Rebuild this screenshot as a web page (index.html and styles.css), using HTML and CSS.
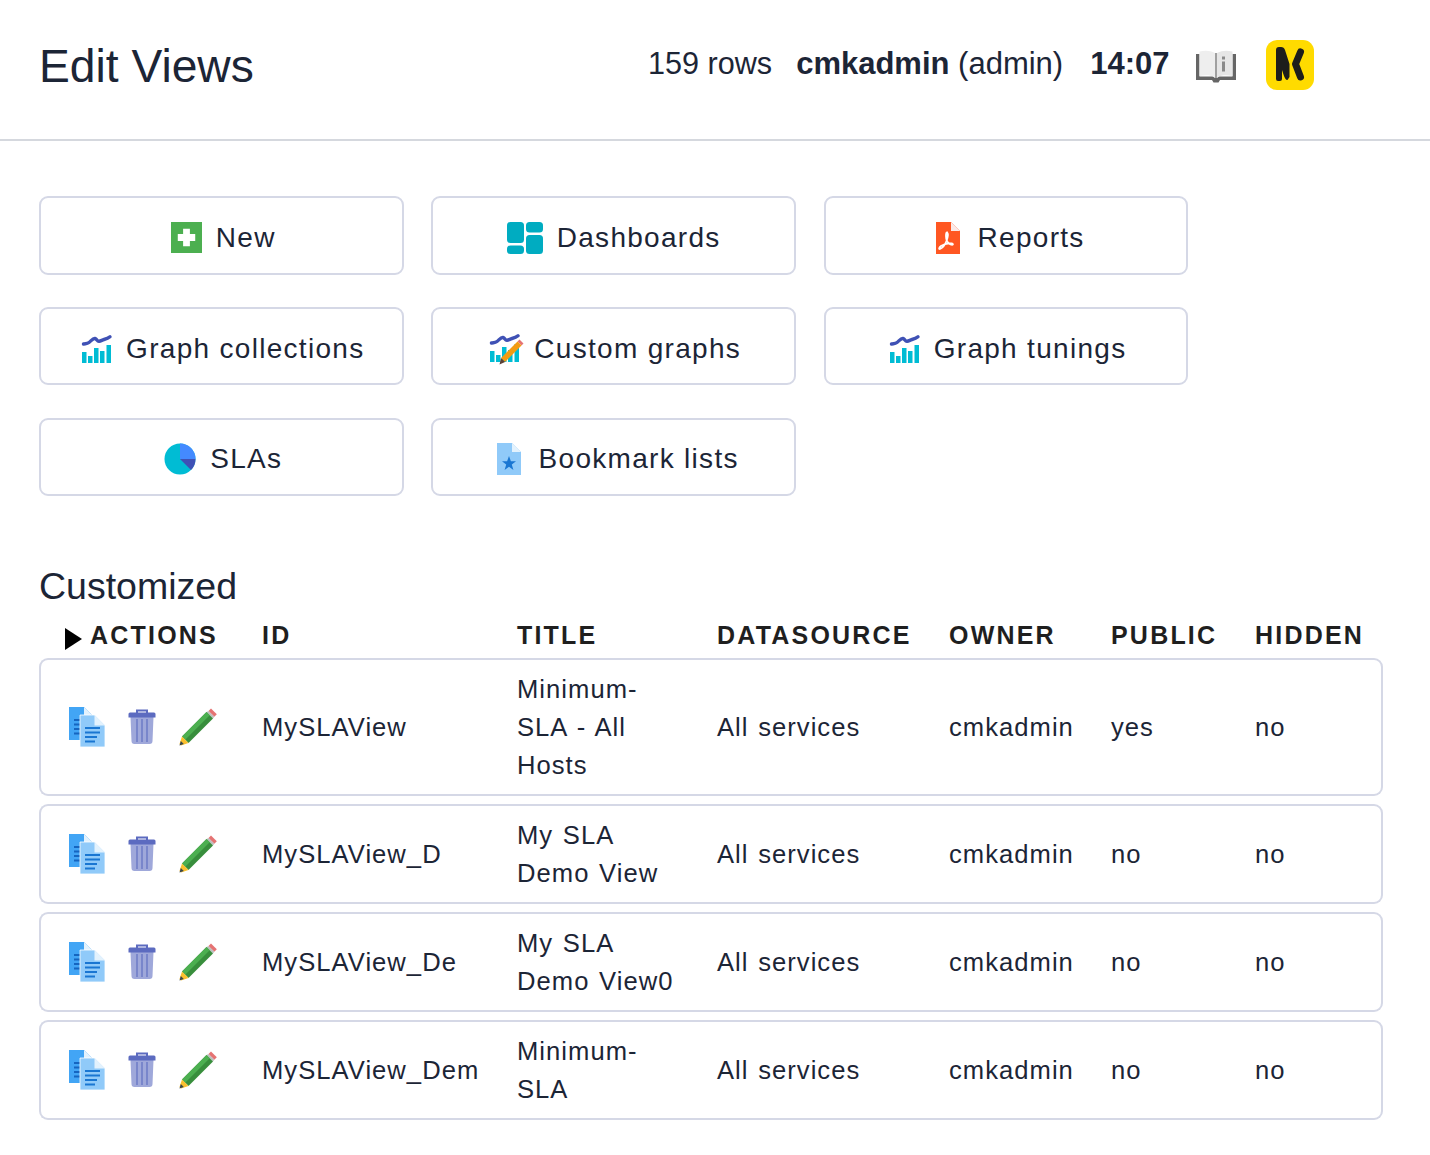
FILE: index.html
```html
<!DOCTYPE html>
<html lang="en">

<head>
    <meta charset="UTF-8">
    <meta name="viewport" content="width=device-width, initial-scale=1.0">
    <title>Edit Views</title>
    <link rel="stylesheet" href="styles.css">
</head>

<body>

    <svg class="defs" width="0" height="0">
        <symbol id="i-graph" viewBox="0 0 30 28" overflow="visible">
            <path d="M1.500 9 C3.500 8.500 5 9 7 7.500 S11 3 13 3.500 S15 6.500 17 6.300 S20 5 22 4.500 S26 3.500 28 1.800" fill="none" stroke="#3f51b5" stroke-width="3.400" stroke-linejoin="round" stroke-linecap="round"/>
            <path d="M0 17h4.500v11H0zM6 21h4.500v7H6zM12 13h4.500v15H12zM18 16h4.500v12H18zM24.500 10H29v18h-4.500z" fill="#00bcd4"/>
        </symbol>
        <symbol id="i-copy" viewBox="0 0 36 40">
            <path d="M0 0h15l9 9v24H0z" fill="#42a5f5"/>
            <path d="M15 0l9 9h-9z" fill="#e3f2fd"/>
            <path d="M5 12h8v2H5zM5 16.500h8v2H5zM5 21h8v2H5zM5 25.500h8v2H5z" fill="#1565c0"/>
            <path d="M11 8h14.500l10.500 10.500V40H11z" fill="#90caf9" stroke="#fff" stroke-width=".8"/>
            <path d="M25.500 8L36 18.500H25.500z" fill="#e3f2fd"/>
            <path d="M16 20h15v2H16zM16 24.500h15v2H16zM16 29h12v2H16zM16 33.500h10v2H16z" fill="#1976d2"/>
        </symbol>
        <symbol id="i-trash" viewBox="0 0 28 36">
            <path d="M9 4V1.500h10V4" fill="none" stroke="#5c6bc0" stroke-width="2"/>
            <path d="M2.500 8h23l-1 24a3 3 0 0 1-3 3h-15a3 3 0 0 1-3-3z" fill="#9fa8da"/>
            <path d="M8 10h2v23H8zM13 10h2v23h-2zM18 10h2v23h-2z" fill="#7986cb"/>
            <path d="M2 3.500h24a1.500 1.500 0 0 1 1.500 1.500v3.500H.500V5A1.500 1.500 0 0 1 2 3.500z" fill="#5c6bc0"/>
        </symbol>
        <symbol id="i-pencil" viewBox="0 0 38 38">
            <path d="M32 .500 L37.800 6.300 L35.300 8.800 L29.500 3z" fill="#e57373"/>
            <path d="M29.500 3 L35.300 8.800 L34 10.500 L27.500 4z" fill="#bdbdbd"/>
            <path d="M27.500 4 L34 10.500 L9.500 35 L3 28.500z" fill="#388e3c"/>
            <path d="M27.500 4 L30.700 7.200 L6.200 31.700 L3 28.500z" fill="#4caf50"/>
            <path d="M3 28.500 L9.500 35 L2 37.500 L.500 36z" fill="#fbc02d"/>
            <path d="M1.800 33 L4.800 36 L.500 37.500z" fill="#37474f"/>
        </symbol>
    </svg>

    <header class="topbar">
        <h1 class="page-title">Edit Views</h1>
        <div class="status">
            <span class="status-rows">159 rows</span>
            <span class="status-user"><b>cmkadmin</b> (admin)</span>
            <b class="status-time">14:07</b>
            <svg class="book" width="40" height="33" viewBox="0 0 40 33">
                <path d="M0 4h3.500v22.500h13.500l2 1.500h2l2-1.500h13.500V4H40v26H24l-1.500 2.500h-5L16 30H0z" fill="#666"/>
                <path d="M3.500 1.500c6-1.500 10.500-1 15.500 1.500v24c-5-2-9.500-2.500-15.500-1z" fill="#eeeeee"/>
                <path d="M21 3c5-2.500 9.500-3 15.500-1.500v24.500c-6-1.500-10.500-1-15.500 1z" fill="#e6e6e6"/>
                <path d="M19 3h2v25h-2z" fill="#a0a0a0"/>
                <path d="M26 6.500h3v3h-3zM26 11.500h3v10h-3z" fill="#8a8a8a"/>
            </svg>
            <svg class="logo" width="48" height="50" viewBox="0 0 48 50">
                <rect width="48" height="50" rx="11" fill="#ffdb00"/>
                <path d="M10 10q0-3 3-3h2q3 0 4 3l4.500 14v13l-2 3c-2 0-2.500-2-3.500-4l-2-6v9q0 2-2 2h-2q-2 0-2-2z" fill="#1d1d1b"/>
                <path d="M34.500 12L29.500 24L34.500 37" fill="none" stroke="#1d1d1b" stroke-width="7" stroke-linecap="round" stroke-linejoin="round"/>
            </svg>
        </div>
    </header>

    <main class="content">

        <nav class="buttons">
            <a class="btn" href="#">
                <svg width="31" height="31" viewBox="0 0 32 32">
                    <rect width="32" height="32" fill="#4caf50"/>
                    <path d="M12.500 7h7v5.500H25v7h-5.500V25h-7v-5.500H7v-7h5.500z" fill="#fff"/>
                </svg>
                New
            </a>
            <a class="btn btn-dash" href="#">
                <svg width="36" height="32" viewBox="0 0 36 32">
                    <g fill="#00acc1">
                        <rect x="0" y="0" width="17" height="21" rx="3.500"/>
                        <rect x="19" y="0" width="17" height="10.500" rx="3.500"/>
                        <rect x="0" y="23.500" width="17" height="8.500" rx="3.500"/>
                        <rect x="19" y="13" width="17" height="19" rx="3.500"/>
                    </g>
                </svg>
                Dashboards
            </a>
            <a class="btn" href="#">
                <svg width="32" height="32" viewBox="-4 0 32 32">
                    <path d="M0 0h15l9 9v23H0z" fill="#ff5722"/>
                    <path d="M15 0l9 9h-9z" fill="#fbe9e7"/>
                    <path d="M11 11c1.500 0 1 4-.500 8s-4 7-6.500 8c-1.500.500-1-1.500 1-3 3-2 7-3 10.500-2.500 2.500.500 1.500 2-1 1-3-1.500-4.500-5-4.500-8.500 0-2 .500-3.500 1-3.500z" fill="none" stroke="#fff" stroke-width="1.800"/>
                </svg>
                Reports
            </a>
            <a class="btn" href="#">
                <svg width="30" height="28"><use href="#i-graph"/></svg>
                Graph collections
            </a>
            <a class="btn" href="#">
                <svg width="30" height="30" viewBox="0 0 30 30">
                    <use href="#i-graph" width="30" height="28"/>
                    <path d="M29.500 5.500 L33.500 9.500 L31.500 11.500 L27.500 7.500z" fill="#e57373"/>
                    <path d="M27.500 7.500 L31.500 11.500 L15 28 L11 24z" fill="#f39c12"/>
                    <path d="M11 24 L15 28 L9.500 30.500z" fill="#5d4037"/>
                </svg>
                Custom graphs
            </a>
            <a class="btn" href="#">
                <svg width="30" height="28"><use href="#i-graph"/></svg>
                Graph tunings
            </a>
            <a class="btn" href="#">
                <svg width="32" height="32" viewBox="0 0 32 32">
                    <circle cx="16" cy="16" r="15.500" fill="#00bcd4"/>
                    <path d="M16 16V.500A15.500 15.500 0 0 1 31.500 16z" fill="#448aff"/>
                    <path d="M16 16h15.500a15.500 15.500 0 0 1-4.500 11z" fill="#3f51b5"/>
                </svg>
                SLAs
            </a>
            <a class="btn" href="#">
                <svg width="32" height="32" viewBox="-4 0 32 32">
                    <path d="M0 0h15l9 9v23H0z" fill="#90caf9"/>
                    <path d="M15 0l9 9h-9z" fill="#e3f2fd"/>
                    <path d="M12 13l1.900 5.300h5.100l-4.200 3.300 1.600 5.400-4.400-3.200-4.400 3.200 1.600-5.400L5 18.300h5.100z" fill="#1976d2"/>
                </svg>
                Bookmark lists
            </a>
        </nav>

        <h2 class="section-title">Customized</h2>

        <table class="views">
            <colgroup>
                <col class="c-actions">
                <col class="c-id">
                <col class="c-title">
                <col class="c-source">
                <col class="c-owner">
                <col class="c-public">
                <col class="c-hidden">
            </colgroup>
            <thead>
                <tr>
                    <th class="th-actions"><span class="arrow"></span>Actions</th>
                    <th>ID</th>
                    <th>Title</th>
                    <th>Datasource</th>
                    <th>Owner</th>
                    <th>Public</th>
                    <th>Hidden</th>
                </tr>
            </thead>
            <tbody>
                <tr>
                    <td>
                        <div class="actions">
                            <svg width="36" height="40"><use href="#i-copy"/></svg>
                            <svg width="28" height="36"><use href="#i-trash"/></svg>
                            <svg width="38" height="38"><use href="#i-pencil"/></svg>
                        </div>
                    </td>
                    <td>MySLAView</td>
                    <td>Minimum-SLA - All Hosts</td>
                    <td>All services</td>
                    <td>cmkadmin</td>
                    <td>yes</td>
                    <td>no</td>
                </tr>
                <tr>
                    <td>
                        <div class="actions">
                            <svg width="36" height="40"><use href="#i-copy"/></svg>
                            <svg width="28" height="36"><use href="#i-trash"/></svg>
                            <svg width="38" height="38"><use href="#i-pencil"/></svg>
                        </div>
                    </td>
                    <td>MySLAView_D</td>
                    <td>My SLA Demo View</td>
                    <td>All services</td>
                    <td>cmkadmin</td>
                    <td>no</td>
                    <td>no</td>
                </tr>
                <tr>
                    <td>
                        <div class="actions">
                            <svg width="36" height="40"><use href="#i-copy"/></svg>
                            <svg width="28" height="36"><use href="#i-trash"/></svg>
                            <svg width="38" height="38"><use href="#i-pencil"/></svg>
                        </div>
                    </td>
                    <td>MySLAView_De</td>
                    <td>My SLA Demo View0</td>
                    <td>All services</td>
                    <td>cmkadmin</td>
                    <td>no</td>
                    <td>no</td>
                </tr>
                <tr>
                    <td>
                        <div class="actions">
                            <svg width="36" height="40"><use href="#i-copy"/></svg>
                            <svg width="28" height="36"><use href="#i-trash"/></svg>
                            <svg width="38" height="38"><use href="#i-pencil"/></svg>
                        </div>
                    </td>
                    <td>MySLAView_Dem</td>
                    <td>Minimum-SLA</td>
                    <td>All services</td>
                    <td>cmkadmin</td>
                    <td>no</td>
                    <td>no</td>
                </tr>
            </tbody>
        </table>

    </main>

</body>

</html>
```

FILE: styles.css
```css
body {
    margin: 0;
    font-family: "Liberation Sans", Arial, sans-serif;
    color: #1c2536;
    background-color: #fff;
}

.defs {
    display: block;
    height: 0;
}

.topbar {
    display: flex;
    align-items: center;
    box-sizing: border-box;
    height: 141px;
    padding: 0 0 8px 39px;
    border-bottom: 2px solid #d5d8de;
}

.page-title {
    margin: 0;
    width: 609px;
    font-size: 46.200px;
    font-weight: 400;
}

.status {
    display: flex;
    align-items: center;
    font-size: 31px;
    padding-bottom: 4px;
}

.status-rows {
    margin-right: 24px;
    font-size: 30.600px;
}

.status-user {
    margin-right: 27px;
}

.book {
    margin: 6px 0 0 27px;
}

.logo {
    margin: 2px 0 0 30px;
}

.content {
    padding: 55px 47px 0 39px;
}

.buttons {
    display: grid;
    grid-template-columns: repeat(3, 364.600px);
    column-gap: 27.800px;
    row-gap: 32.300px;
}

.btn {
    display: flex;
    align-items: center;
    justify-content: center;
    gap: 14px;
    box-sizing: border-box;
    height: 78.500px;
    padding: 5px 0 0 4px;
    border: 2px solid #d5d8e6;
    border-radius: 9px;
    font-size: 28px;
    letter-spacing: 1.300px;
    text-decoration: none;
    color: #1c2536;
}

.btn-dash {
    padding-left: 0;
}

.btn svg {
    overflow: visible;
}

.section-title {
    margin: 68px 0 0;
    font-size: 37.500px;
    line-height: 44px;
    font-weight: 400;
}

.views {
    width: 1344px;
    margin-top: 3.500px;
    table-layout: fixed;
    border-collapse: separate;
    border-spacing: 0 8px;
    font-size: 25.600px;
    letter-spacing: 1.030px;
    word-spacing: 1.500px;
    line-height: 38px;
}

.c-actions { width: 223px; }
.c-id { width: 255px; }
.c-title { width: 200px; }
.c-source { width: 232px; }
.c-owner { width: 162px; }
.c-public { width: 144px; }
.c-hidden { width: 128px; }

th {
    padding: 0;
    text-align: left;
    font-size: 25px;
    line-height: 30px;
    font-weight: 700;
    text-transform: uppercase;
    letter-spacing: 2.200px;
    color: #1f1f1f;
}

.th-actions {
    padding-left: 26px;
}

.arrow {
    display: inline-block;
    width: 0;
    height: 0;
    margin: -4px 8px -4px 0;
    vertical-align: -2px;
    border-left: 17px solid #000;
    border-top: 11px solid transparent;
    border-bottom: 11px solid transparent;
}

td {
    padding: 10px 30px 10px 0;
    border-top: 2px solid #d5d8e6;
    border-bottom: 2px solid #d5d8e6;
}

td:first-child {
    padding-right: 0;
    border-left: 2px solid #d5d8e6;
    border-radius: 9px 0 0 9px;
}

td:last-child {
    border-right: 2px solid #d5d8e6;
    border-radius: 0 9px 9px 0;
}

.actions {
    display: flex;
    align-items: center;
    gap: 23px;
    padding-left: 28px;
}
```
